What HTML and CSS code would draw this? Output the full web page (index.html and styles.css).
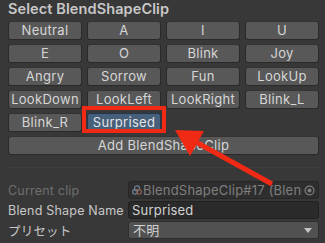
FILE: index.html
```html
<!DOCTYPE html>
<html>
<head>
<meta charset="utf-8">
<link rel="stylesheet" href="styles.css">
</head>
<body>
<div class="panel">
  <div class="title">Select BlendShapeClip</div>
  <div class="grid">
    <div class="btn">Neutral</div>
    <div class="btn">A</div>
    <div class="btn">I</div>
    <div class="btn">U</div>
    <div class="btn">E</div>
    <div class="btn">O</div>
    <div class="btn">Blink</div>
    <div class="btn">Joy</div>
    <div class="btn">Angry</div>
    <div class="btn">Sorrow</div>
    <div class="btn">Fun</div>
    <div class="btn">LookUp</div>
    <div class="btn">LookDown</div>
    <div class="btn">LookLeft</div>
    <div class="btn">LookRight</div>
    <div class="btn">Blink_L</div>
    <div class="btn">Blink_R</div>
    <div class="btn selected">Surprised</div>
  </div>
  <div class="btn add">Add BlendShapeClip</div>
  <div class="sep"></div>
  <div class="props">
    <div class="row">
      <div class="label disabled">Current clip</div>
      <div class="objfield">
        <svg class="objicon" width="10" height="10" viewBox="0 0 10 10">
          <circle cx="5" cy="3.4" r="2.6" fill="none" stroke="#6d7f92" stroke-width="1.2"/>
          <circle cx="3" cy="6.8" r="2.4" fill="none" stroke="#6d7f92" stroke-width="1.2"/>
          <circle cx="7" cy="6.8" r="2.4" fill="none" stroke="#8a5a4a" stroke-width="1.2"/>
        </svg>
        <span class="objtext">BlendShapeClip#17 (BlendShapeClip)</span>
        <svg class="target" width="11" height="11" viewBox="0 0 11 11">
          <circle cx="5.5" cy="5.5" r="4.4" fill="none" stroke="#7e7e7e" stroke-width="1.2"/>
          <circle cx="5.5" cy="5.5" r="2" fill="#7e7e7e"/>
        </svg>
      </div>
    </div>
    <div class="row">
      <div class="label">Blend Shape Name</div>
      <div class="textfield">Surprised</div>
    </div>
    <div class="row">
      <div class="label">プリセット</div>
      <div class="dropdown">不明<span class="caret"></span></div>
    </div>
  </div>
</div>
<svg class="annot" width="325" height="243" viewBox="0 0 325 243">
  <rect x="84" y="108" width="80" height="23" fill="none" stroke="#f02a14" stroke-width="4"/>
  <line x1="272" y1="184" x2="194" y2="141" stroke="#f02a14" stroke-width="5"/>
  <polygon points="175,130 204,131 190,156" fill="#f02a14"/>
</svg>
</body>
</html>
```
FILE: styles.css
```css
html, body {
  margin: 0;
  padding: 0;
  background: #383838;
  width: 325px;
  height: 243px;
  overflow: hidden;
  font-family: Inter, "Noto Sans CJK JP", sans-serif;
  color: #c8c8c8;
}

.panel {
  padding: 0 6px 0 8px;
}

.title {
  height: 21px;
  line-height: 18px;
  font-size: 14.5px;
  font-weight: 600;
  letter-spacing: 0.1px;
  color: #c8c8c8;
}

.grid {
  display: grid;
  grid-template-columns: repeat(4, 74px);
  grid-auto-rows: 19px;
  column-gap: 5px;
  row-gap: 4px;
}

.btn {
  box-sizing: border-box;
  background: #585858;
  border: 1px solid #2a2a2a;
  border-top-color: #333333;
  border-radius: 3px;
  font-size: 13px;
  letter-spacing: 0.3px;
  line-height: 17px;
  text-align: center;
  color: #d6d6d6;
  white-space: nowrap;
  overflow: hidden;
}

.btn.selected {
  background: #46607c;
  border-color: #22364d;
  color: #e4e4e4;
}

.btn.add {
  margin-top: 4px;
  height: 19px;
  width: 311px;
}

.sep {
  margin: 12px 0 13px 0;
  height: 1px;
  background: #3f3f3f;
}

.props {
  display: flex;
  flex-direction: column;
  gap: 2px;
}

.row {
  display: flex;
  align-items: center;
  height: 18px;
}

.label {
  width: 120px;
  flex: none;
  font-size: 12.5px;
  letter-spacing: 0.2px;
  color: #c8c8c8;
  white-space: nowrap;
}

.label.disabled {
  color: #6e6e6e;
}

.objfield, .textfield, .dropdown {
  box-sizing: border-box;
  width: 191px;
  height: 18px;
  border-radius: 3px;
  font-size: 13px;
  letter-spacing: 0.2px;
  line-height: 16px;
  white-space: nowrap;
  overflow: hidden;
}

.objfield {
  display: flex;
  align-items: center;
  background: #2e2e2e;
  border: 1px solid #272727;
  padding: 0 3px 0 3px;
  color: #7e7e7e;
}

.objicon {
  flex: none;
  margin-right: 1px;
}

.objtext {
  flex: 1;
  overflow: hidden;
  white-space: nowrap;
}

.target {
  flex: none;
  margin-left: 2px;
}

.textfield {
  background: #2a2a2a;
  border: 1px solid #212121;
  padding: 0 3px;
  color: #d2d2d2;
}

.dropdown {
  position: relative;
  background: #515151;
  border: 1px solid #2f2f2f;
  padding: 0 4px;
  color: #d2d2d2;
}

.caret {
  position: absolute;
  right: 6px;
  top: 6px;
  width: 0;
  height: 0;
  border-left: 4px solid transparent;
  border-right: 4px solid transparent;
  border-top: 5px solid #c4c4c4;
}

.annot {
  position: absolute;
  left: 0;
  top: 0;
  pointer-events: none;
}
```
